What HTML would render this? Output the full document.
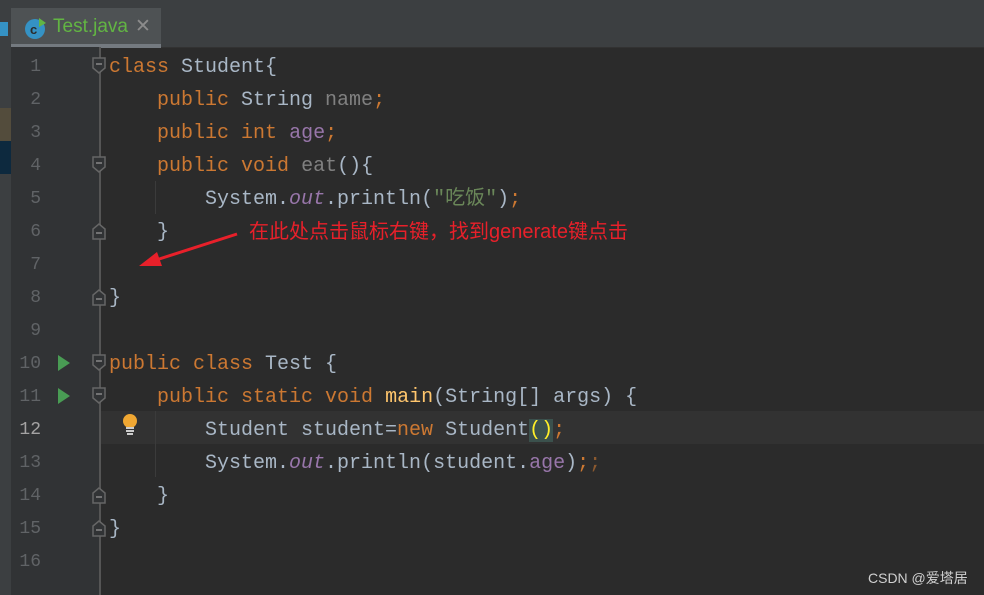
<!DOCTYPE html>
<html><head><meta charset="utf-8"><style>
body{margin:0;width:984px;height:595px;overflow:hidden;background:#2b2b2b;position:relative;font-family:"Liberation Mono",monospace}
.top{position:absolute;left:0;top:0;width:984px;height:8px;background:#3c3f41}
.tabbar{position:absolute;left:11px;top:8px;width:973px;height:39px;background:#3c3f41;border-bottom:1px solid #323232}
.tab{position:absolute;left:11px;top:8px;width:150px;height:36px;background:#4e5254;border-bottom:4px solid #747a80;box-sizing:content-box}
.tab .name{position:absolute;left:42px;top:8px;font:19px "Liberation Sans",sans-serif;color:#62b543}
.tab .x{position:absolute;left:124px;top:7px;font:19px "Liberation Sans",sans-serif;color:#8c8c8c}
.side{position:absolute;left:0;top:8px;width:11px;height:587px;background:#3c3f41}
.gutter{position:absolute;left:11px;top:47px;width:89px;height:548px;background:#313335}
.vline{position:absolute;left:99px;top:47px;width:2px;height:548px;background:#555}
.hl{position:absolute;left:101px;top:411px;width:883px;height:33px;background:#323232}
.ln{position:absolute;left:11px;width:30px;text-align:right;font-size:18px;color:#606366;height:33px;line-height:33px;padding-top:2px}
.code{position:absolute;left:109px;font-size:20px;height:33px;line-height:33px;white-space:pre;color:#a9b7c6;padding-top:2px}
.k{color:#cc7832}.f{color:#9876aa}.g{color:#808080}.s{color:#6a8759}.i{font-style:italic;color:#9876aa}
.fold{position:absolute;left:92px;width:14px;height:18px}
.run{position:absolute;left:58px;width:0;height:0;border-left:12px solid #499c54;border-top:8px solid transparent;border-bottom:8px solid transparent}
.guide{position:absolute;width:1px;background:#3b3b3b}
.ann{position:absolute;left:249px;top:215px;font:20px "Liberation Sans","Noto Sans CJK SC",sans-serif;color:#e8202a;white-space:nowrap}
.wm{position:absolute;left:868px;top:568px;font:14px "Liberation Sans","Noto Sans CJK SC",sans-serif;color:#d0d0d0}
</style></head><body>
<div class="top"></div>
<div class="tabbar"></div>
<div class="tab">
<svg style="position:absolute;left:13px;top:8px" width="24" height="24"><circle cx="11" cy="13" r="10" fill="#3592c4"/><text x="6" y="18" font-size="13" font-family="Liberation Sans" fill="#2b2b2b" font-weight="bold">c</text><path d="M15 2 L22 7 L15 11Z" fill="#62b543"/></svg>
<span class="name">Test.java</span><span class="x">✕</span></div>
<div class="side"><div style="position:absolute;left:0;top:14px;width:8px;height:14px;background:#3592c4"></div><div style="position:absolute;left:0;top:100px;width:11px;height:33px;background:#534c3c"></div><div style="position:absolute;left:0;top:133px;width:11px;height:33px;background:#0d293e"></div></div>
<div class="gutter"></div>
<div class="hl"></div>
<div class="vline"></div>
<div class="guide" style="left:155px;top:181px;height:33px"></div>
<div class="guide" style="left:155px;top:411px;height:66px"></div>

<div class="ln" style="top:49px">1</div><div class="ln" style="top:82px">2</div><div class="ln" style="top:115px">3</div><div class="ln" style="top:148px">4</div><div class="ln" style="top:181px">5</div><div class="ln" style="top:214px">6</div><div class="ln" style="top:247px">7</div><div class="ln" style="top:280px">8</div><div class="ln" style="top:313px">9</div><div class="ln" style="top:346px">10</div><div class="ln" style="top:379px">11</div><div class="ln" style="top:412px;color:#a4a3a3">12</div><div class="ln" style="top:445px">13</div><div class="ln" style="top:478px">14</div><div class="ln" style="top:511px">15</div><div class="ln" style="top:544px">16</div>

<div class="run" style="top:355px"></div><div class="run" style="top:388px"></div>
<svg style="position:absolute;left:121px;top:413px" width="18" height="24"><circle cx="9" cy="8" r="7" fill="#f0a732"/><rect x="5" y="14" width="8" height="2" fill="#ccc"/><rect x="5" y="17" width="8" height="2" fill="#ccc"/><rect x="6" y="20" width="6" height="2" fill="#ccc"/></svg>

<svg class="fold" style="top:57px"><path d="M1 1H13V11L7 16L1 11Z" fill="#313335" stroke="#666" stroke-width="1.5"/><path d="M4 7H10" stroke="#888" stroke-width="1.5"/></svg>
<svg class="fold" style="top:156px"><path d="M1 1H13V11L7 16L1 11Z" fill="#313335" stroke="#666" stroke-width="1.5"/><path d="M4 7H10" stroke="#888" stroke-width="1.5"/></svg>
<svg class="fold" style="top:222px"><path d="M1 17H13V7L7 2L1 7Z" fill="#313335" stroke="#666" stroke-width="1.5"/><path d="M4 11H10" stroke="#888" stroke-width="1.5"/></svg>
<svg class="fold" style="top:288px"><path d="M1 17H13V7L7 2L1 7Z" fill="#313335" stroke="#666" stroke-width="1.5"/><path d="M4 11H10" stroke="#888" stroke-width="1.5"/></svg>
<svg class="fold" style="top:354px"><path d="M1 1H13V11L7 16L1 11Z" fill="#313335" stroke="#666" stroke-width="1.5"/><path d="M4 7H10" stroke="#888" stroke-width="1.5"/></svg>
<svg class="fold" style="top:387px"><path d="M1 1H13V11L7 16L1 11Z" fill="#313335" stroke="#666" stroke-width="1.5"/><path d="M4 7H10" stroke="#888" stroke-width="1.5"/></svg>
<svg class="fold" style="top:486px"><path d="M1 17H13V7L7 2L1 7Z" fill="#313335" stroke="#666" stroke-width="1.5"/><path d="M4 11H10" stroke="#888" stroke-width="1.5"/></svg>
<svg class="fold" style="top:519px"><path d="M1 17H13V7L7 2L1 7Z" fill="#313335" stroke="#666" stroke-width="1.5"/><path d="M4 11H10" stroke="#888" stroke-width="1.5"/></svg>

<div class="code" style="top:49px"><span class="k">class</span> Student{</div>
<div class="code" style="top:82px">    <span class="k">public</span> String <span class="g">name</span><span class="k">;</span></div>
<div class="code" style="top:115px">    <span class="k">public int</span> <span class="f">age</span><span class="k">;</span></div>
<div class="code" style="top:148px">    <span class="k">public void</span> <span class="g">eat</span>(){</div>
<div class="code" style="top:181px">        System.<span class="i">out</span>.println(<span class="s">"吃饭"</span>)<span class="k">;</span></div>
<div class="code" style="top:214px">    }</div>
<div class="code" style="top:280px">}</div>
<div class="code" style="top:346px"><span class="k">public class</span> Test {</div>
<div class="code" style="top:379px">    <span class="k">public static void</span> <span style="color:#ffc66d">main</span>(String[] args) {</div>
<div class="code" style="top:412px">        Student student=<span class="k">new</span> Student<span style="color:#ffef28;background:#3b514d">()</span><span class="k">;</span></div>
<div class="code" style="top:445px">        System.<span class="i">out</span>.println(student.<span class="f">age</span>)<span class="k">;</span><span class="k" style="opacity:.6">;</span></div>
<div class="code" style="top:478px">    }</div>
<div class="code" style="top:511px">}</div>

<div class="ann">在此处点击鼠标右键，找到generate键点击</div>
<svg style="position:absolute;left:135px;top:228px" width="110" height="45"><path d="M102 6 L18 33" stroke="#e8202a" stroke-width="3"/><path d="M4 38 L22 24 L27 38Z" fill="#e8202a"/></svg>
<div class="wm">CSDN @爱塔居</div>
</body></html>
